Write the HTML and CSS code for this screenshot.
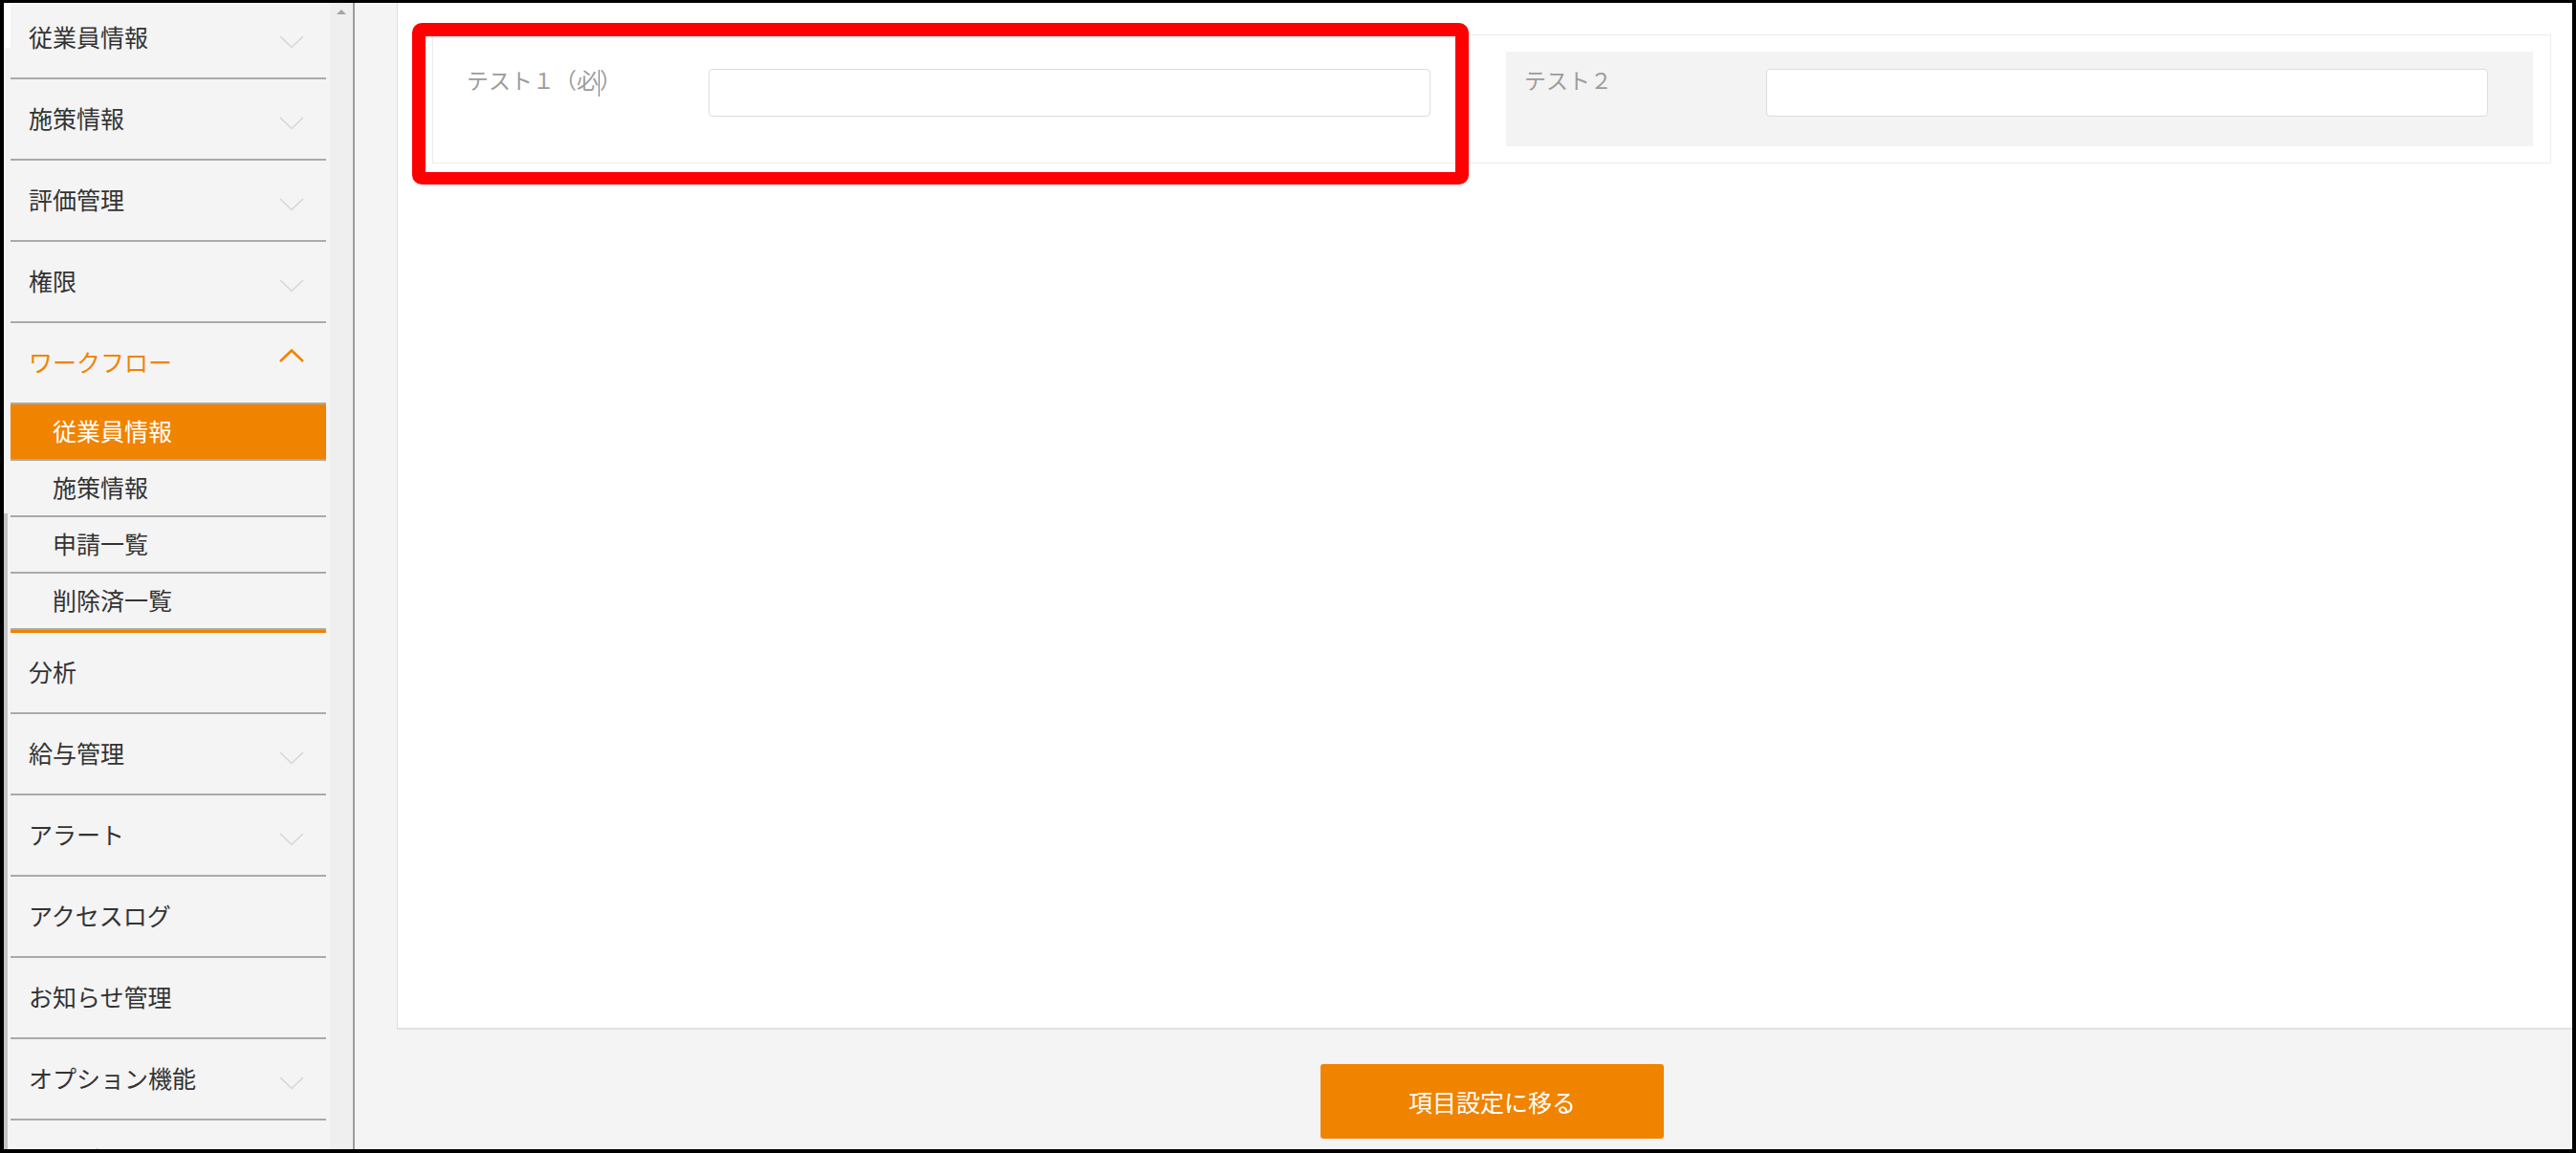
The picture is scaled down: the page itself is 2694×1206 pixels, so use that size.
FILE: index.html
```html
<!doctype html>
<html>
  <head>
    <meta charset="utf-8">
    <title>ワークフロー 従業員情報</title>
    <meta name="viewport" content="width=device-width">
    <link rel="stylesheet" href="styles.css">
  </head>
  <body>
    <div class="app">
      <div class="edge">
        <div class="edge-top"></div>
        <div class="edge-mid"></div>
        <div class="edge-thumb"></div>
      </div>

      <nav class="sidebar">
        <div class="menu">
          <div class="item">従業員情報<svg class="chev" width="26" height="14" viewBox="0 0 26 14"><polyline points="1,1 13,12.5 25,1"/></svg></div>
          <div class="item">施策情報<svg class="chev" width="26" height="14" viewBox="0 0 26 14"><polyline points="1,1 13,12.5 25,1"/></svg></div>
          <div class="item">評価管理<svg class="chev" width="26" height="14" viewBox="0 0 26 14"><polyline points="1,1 13,12.5 25,1"/></svg></div>
          <div class="item">権限<svg class="chev" width="26" height="14" viewBox="0 0 26 14"><polyline points="1,1 13,12.5 25,1"/></svg></div>
          <div class="item open">ワークフロー<svg class="chev up" width="26" height="14" viewBox="0 0 26 14"><polyline points="1,13 13,1.5 25,13"/></svg></div>
          <div class="sub">
            <div class="sub-item active">従業員情報</div>
            <div class="sub-item">施策情報</div>
            <div class="sub-item">申請一覧</div>
            <div class="sub-item">削除済一覧</div>
          </div>
          <div class="item">分析</div>
          <div class="item">給与管理<svg class="chev" width="26" height="14" viewBox="0 0 26 14"><polyline points="1,1 13,12.5 25,1"/></svg></div>
          <div class="item">アラート<svg class="chev" width="26" height="14" viewBox="0 0 26 14"><polyline points="1,1 13,12.5 25,1"/></svg></div>
          <div class="item">アクセスログ</div>
          <div class="item">お知らせ管理</div>
          <div class="item">オプション機能<svg class="chev" width="26" height="14" viewBox="0 0 26 14"><polyline points="1,1 13,12.5 25,1"/></svg></div>
          <div class="item">ヘルプ</div>
        </div>
      </nav>

      <div class="scroll">
        <div class="scroll-up"></div>
      </div>
      <div class="divider"></div>

      <main class="main">
        <div class="panel">
          <div class="card">
            <div class="field">
              <div class="label">テスト１（必<span class="caret"></span>）</div>
              <div class="input"></div>
            </div>
            <div class="field alt">
              <div class="label">テスト２</div>
              <div class="input"></div>
            </div>
          </div>
        </div>
        <div class="footer">
          <button class="next">項目設定に移る</button>
        </div>
      </main>
    </div>

    <div class="mark"></div>
  </body>
</html>
```

FILE: styles.css
```css
html, body {
  margin: 0;
  padding: 0;
}
body {
  width: 2694px;
  height: 1206px;
  box-sizing: border-box;
  border: 4px solid #000;
  border-top-width: 3px;
  overflow: hidden;
  font-family: "Noto Sans CJK JP", "Noto Sans", sans-serif;
  color: #333;
  background: #f4f4f4;
}

.app {
  display: flex;
  height: 100%;
}

/* thin strip at the far left */
.edge {
  width: 7px;
  display: flex;
  flex-direction: column;
}
.edge-top {
  height: 47px;
  background: #fff;
}
.edge-mid {
  height: 487px;
  background: #f4f4f4;
}
.edge-thumb {
  flex: 1;
  width: 4px;
  background: #c4c4c4;
}

/* side menu */
.sidebar {
  width: 330px;
  background: #f4f4f4;
  overflow: hidden;
}
.menu {
  margin-top: -5px;
}
.item {
  height: 80px;
  border-bottom: 2px solid #aaa;
  display: flex;
  align-items: center;
  justify-content: space-between;
  padding: 0 23px 3px 19px;
  font-size: 25px;
  line-height: 1;
}
.item .chev {
  margin-top: 11px;
  fill: none;
  stroke: #d6d6d6;
  stroke-width: 1.6;
}
.item.open {
  color: #f08300;
}
.item .chev.up {
  margin-top: -13px;
  stroke: #f08300;
  stroke-width: 2.6;
}
.sub {
  border-bottom: 3px solid #f08300;
}
.sub-item {
  height: 55px;
  border-bottom: 2px solid #aaa;
  display: flex;
  align-items: center;
  padding: 0 0 2px 44px;
  font-size: 25px;
  line-height: 1;
}
.sub-item.active {
  background: #f08300;
  color: #fff;
}

/* scrollbar beside the menu */
.scroll {
  width: 28px;
  background: linear-gradient(to right, #f4f4f4 4px, #efefef 4px);
}
.scroll-up {
  width: 0;
  height: 0;
  margin: 7px 0 0 11px;
  border-left: 5px solid transparent;
  border-right: 5px solid transparent;
  border-bottom: 5px solid #a4a4a4;
}
.divider {
  width: 2px;
  background: #9c9c9c;
}

/* content */
.main {
  flex: 1;
  display: flex;
  flex-direction: column;
  padding-left: 44px;
  background: #f4f4f4;
}
.panel {
  flex: 1;
  background: #fff;
  border-left: 1px solid #ddd;
  border-bottom: 2px solid #e2e2e2;
  padding: 33px 22px 0 36px;
}
.card {
  border: 1px solid #ececec;
  padding: 17px 18px 17px 16px;
  display: grid;
  grid-template-columns: 1fr 1fr;
  gap: 32px;
}
.field {
  display: flex;
  padding: 18px 47px 31px 19px;
  background: #fff;
}
.field.alt {
  background: #f3f3f3;
}
.label {
  width: 253px;
  font-size: 23px;
  line-height: 22px;
  color: #9c9c9c;
}
.caret {
  display: inline-block;
  width: 0;
  height: 28px;
  border-left: 1px solid #777;
  vertical-align: -8px;
}
.input {
  flex: 1;
  height: 48px;
  border: 1px solid #ddd;
  border-radius: 4px;
  background: #fff;
}

.footer {
  height: 125px;
  display: flex;
  justify-content: center;
  align-items: flex-start;
  padding-left: 16px;
}
.next {
  margin-top: 36px;
  width: 359px;
  height: 78px;
  border: 0;
  border-radius: 3px;
  background: #f08300;
  color: #fff;
  font-family: inherit;
  font-size: 25px;
  cursor: pointer;
}

/* red annotation frame */
.mark {
  position: absolute;
  left: 431px;
  top: 24px;
  width: 1105px;
  height: 169px;
  box-sizing: border-box;
  border: 14px solid #ff0000;
  border-bottom-width: 13px;
  border-radius: 10px;
}
```
